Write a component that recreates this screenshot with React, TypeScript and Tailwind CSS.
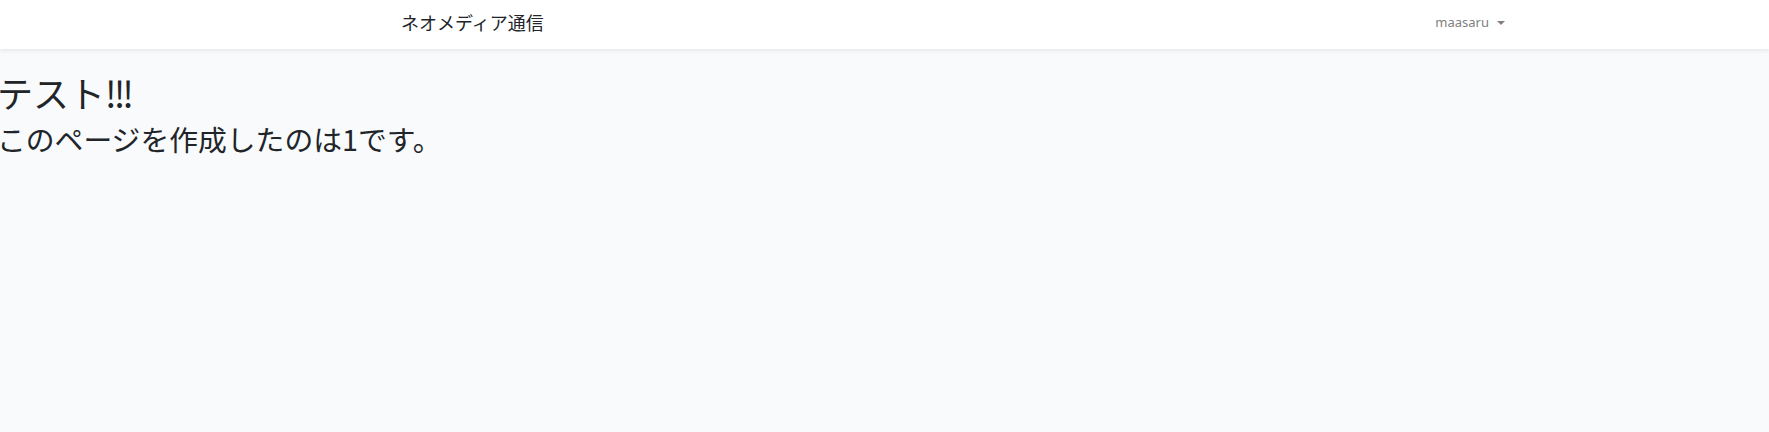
export default function App() {
  return (
    <div className="min-h-screen bg-[#f8fafc] text-[#212529]" style={{ fontFamily: '"Noto Sans", "Noto Sans CJK JP", sans-serif' }}>
      <nav className="relative z-10 h-[49px] bg-white shadow-[0_2px_4px_rgba(0,0,0,0.075)]">
        <div className="flex h-full items-center pl-[401px] pr-[264px]">
          <a href="#" className="text-[18px] leading-none text-[#212529] -mt-[5px]" style={{ fontFamily: '"Noto Sans CJK JP", sans-serif' }}>
            ネオメディア通信
          </a>
          <div className="ml-auto flex items-center -mt-[4px]">
            <a href="#" className="flex items-center text-[13px] text-[#808080]">
              maasaru
              <span className="ml-2 h-0 w-0 border-x-[4px] border-t-[4px] border-x-transparent border-t-[#808080]" />
            </a>
          </div>
        </div>
      </nav>
      <main className="pt-[22px] -ml-[3px]" style={{ fontFamily: '"Noto Sans CJK JP", sans-serif' }}>
        <h1 className="text-[36px] font-normal leading-[1.2] mb-2">
          テスト<span className="tracking-[-3px]">!!!</span>
        </h1>
        <h2 className="text-[28.8px] font-normal leading-[1.2]">このページを作成したのは1です。</h2>
      </main>
    </div>
  )
}
